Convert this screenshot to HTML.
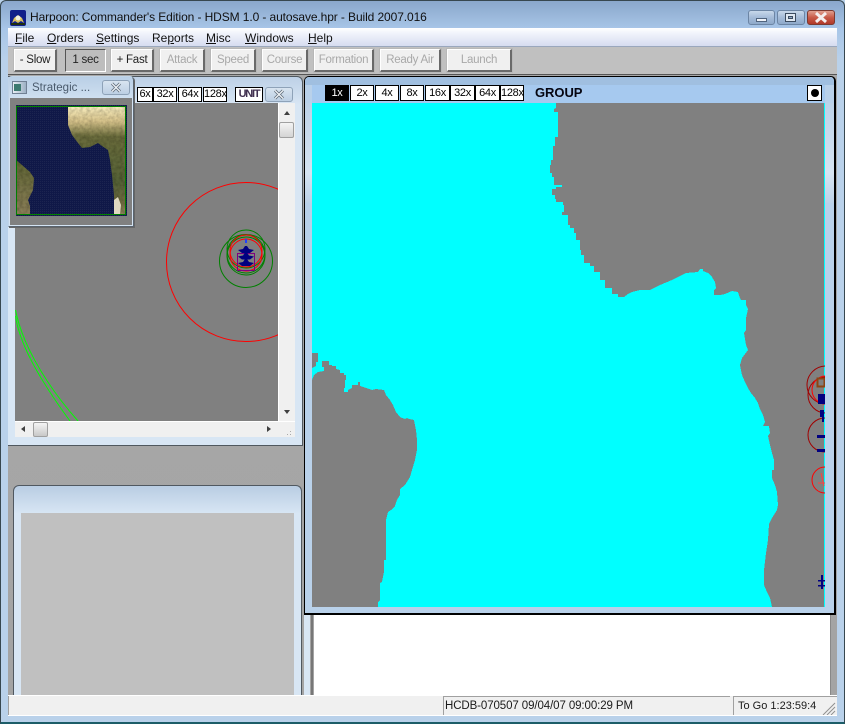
<!DOCTYPE html>
<html>
<head>
<meta charset="utf-8">
<style>
html,body{margin:0;padding:0;width:845px;height:724px;overflow:hidden;background:#b9d1ea;}
body{position:relative;font-family:"Liberation Sans",sans-serif;font-size:12px;color:#000;}
div{position:absolute;box-sizing:border-box;}
.t{white-space:nowrap;line-height:16px;}
.btn{top:49px;height:23px;background:#f0f0f0;border:1px solid #fff;border-right:2px solid #696969;border-bottom:2px solid #696969;box-shadow:0 0 0 1px #b8b8b8;text-align:center;line-height:20px;color:#222;white-space:nowrap;font-size:11.5px;letter-spacing:-.25px;}
.dis{color:#a8a8a8;}
.z{top:87px;height:15px;background:#fff;border:1px solid #000;text-align:center;line-height:13px;font-size:11px;letter-spacing:-.3px;overflow:hidden;white-space:nowrap;}
.y{top:85px;height:16px;line-height:15px;}
.cap{border:1px solid #6c85a4;border-radius:3px;background:linear-gradient(#c8d8ea,#a5bcd8 50%,#8ea9ca);}
u{text-decoration:underline;}
</style>
</head>
<body>
<!-- window frame -->
<div style="left:0;top:0;width:845px;height:724px;border:1px solid #37474f;border-bottom:2px solid #1c5d68;border-radius:6px 6px 0 0;background:linear-gradient(#8aa7cb 0,#a8c6e8 28px,#b9d1ea 60px);"></div>
<div style="left:10px;top:10px;width:16px;height:16px;background:#10208a;border-radius:2px;"></div>
<svg style="position:absolute;left:10px;top:10px" width="16" height="16"><path d="M2 13 L4 8 L8 5 L12 8 L14 13 L11 11 L8 13 L5 11Z" fill="#d8c060"/><circle cx="8" cy="8" r="2.5" fill="#f0f0e0"/><rect x="1" y="13" width="14" height="2" fill="#203010"/></svg>
<div class="t" style="left:30px;top:9px;font-size:12px;color:#101010;letter-spacing:-.1px;">Harpoon: Commander's Edition - HDSM 1.0 - autosave.hpr - Build 2007.016</div>
<!-- caption buttons -->
<div class="cap" style="left:748px;top:10px;width:27px;height:15px;"></div>
<div style="left:756px;top:18px;width:11px;height:4px;background:#eef2f8;border:1px solid #50647e;"></div>
<div class="cap" style="left:777px;top:10px;width:28px;height:15px;"></div>
<div style="left:785px;top:13px;width:11px;height:9px;background:#dfe8f2;border:1px solid #3c4c60;"></div>
<div style="left:788px;top:16px;width:5px;height:3px;background:#90a8c4;border:1px solid #3c4c60;"></div>
<div style="left:807px;top:10px;width:28px;height:15px;border:1px solid #7c3a30;border-radius:3px;background:linear-gradient(#e0a090,#c85a48 50%,#b03a2a);"></div>
<svg style="position:absolute;left:814px;top:11px" width="14" height="13"><path d="M2 2 L12 11 M12 2 L2 11" stroke="#f4eeee" stroke-width="3"/></svg>
<!-- menu -->
<div style="left:8px;top:28px;width:829px;height:19px;background:linear-gradient(#ffffff,#f0f3fb 30%,#d6dcf0);border-bottom:1px solid #9aa7bd;"></div>
<div class="t" style="left:15px;top:30px;color:#111;"><u>F</u>ile</div>
<div class="t" style="left:47px;top:30px;color:#111;"><u>O</u>rders</div>
<div class="t" style="left:96px;top:30px;color:#111;"><u>S</u>ettings</div>
<div class="t" style="left:152px;top:30px;color:#111;">Re<u>p</u>orts</div>
<div class="t" style="left:206px;top:30px;color:#111;"><u>M</u>isc</div>
<div class="t" style="left:245px;top:30px;color:#111;"><u>W</u>indows</div>
<div class="t" style="left:308px;top:30px;color:#111;"><u>H</u>elp</div>
<!-- toolbar -->
<div style="left:8px;top:47px;width:829px;height:28px;background:#c0c0c0;border-bottom:1px solid #555;"></div>
<div class="btn" style="left:14px;width:43px;">- Slow</div>
<div class="btn" style="left:65px;width:41px;background:#bdbdbd;border:1px solid #555;border-right:1px solid #fff;border-bottom:1px solid #fff;box-shadow:none;">1 sec</div>
<div class="btn" style="left:111px;width:43px;">+ Fast</div>
<div class="btn dis" style="left:160px;width:45px;">Attack</div>
<div class="btn dis" style="left:211px;width:45px;">Speed</div>
<div class="btn dis" style="left:262px;width:46px;">Course</div>
<div class="btn dis" style="left:314px;width:60px;">Formation</div>
<div class="btn dis" style="left:380px;width:61px;">Ready Air</div>
<div class="btn dis" style="left:447px;width:65px;">Launch</div>
<!-- client area -->
<div style="left:8px;top:75px;width:829px;height:620px;background:linear-gradient(#a8a8a8,#a4a4a4);"></div>
<!-- left panel -->
<div style="left:8px;top:76px;width:295px;height:370px;background:linear-gradient(#bdd0e6,#d8e6f4 28px);border:1px solid #50585f;border-left:none;border-radius:0 6px 0 0;"></div>
<div style="left:15px;top:103px;width:263px;height:318px;background:#808080;"></div>
<svg style="position:absolute;left:15px;top:103px" width="263" height="318">
<g fill="none" transform="translate(-15,-103)">
<circle cx="246" cy="262" r="79.5" stroke="#ff0000" stroke-width="1"/>
<circle cx="246" cy="261" r="26.5" stroke="#008000"/>
<circle cx="246" cy="249" r="19" stroke="#008000"/>
<circle cx="246" cy="254" r="19" stroke="#008000"/>
<circle cx="246" cy="256" r="19" stroke="#008000"/>
<circle cx="246" cy="251" r="16" stroke="#ff0000"/>
<circle cx="246" cy="255" r="16" stroke="#ff0000"/>
<rect x="237.500" y="253.500" width="17" height="17" stroke="#800080"/>
<path d="M15.500 316 C19 340 34 372 70 421" stroke="#00ff00"/>
<path d="M15.500 310 C21 338 40 378 78 421" stroke="#00ff00"/>
<g fill="#000080" stroke="none">
<path d="M245 246 L247 246 L249 249 L254 250 L250 253 L242 253 L238 250 L243 249Z"/>
<path d="M245 252.500 L247 252.500 L249 255.500 L254 256.500 L250 259.500 L242 259.500 L238 256.500 L243 255.500Z"/>
<path d="M245 259 L247 259 L249 262 L254 263 L250 266 L242 266 L238 263 L243 262Z"/>
</g>
<path d="M246 243 L246 239" stroke="#2040ff" stroke-width="2"/>
</g>
</svg>
<!-- left scrollbars -->
<div style="left:278px;top:103px;width:17px;height:334px;background:#f0f0f0;border-left:1px solid #fff;"></div>
<div style="left:15px;top:421px;width:280px;height:16px;background:#f0f0f0;border-top:1px solid #fff;"></div>
<div style="left:279px;top:122px;width:15px;height:16px;background:linear-gradient(#f4f4f4,#d4d4d4);border:1px solid #a0a0a0;border-radius:2px;"></div>
<div style="left:33px;top:422px;width:15px;height:15px;background:linear-gradient(#f4f4f4,#c8c8c8);border:1px solid #a0a0a0;border-radius:2px;"></div>
<svg style="position:absolute;left:15px;top:103px" width="282" height="336">
<path d="M269 12 L275 12 L272 8Z M269 307 L275 307 L272 311Z" fill="#404040"/>
<path d="M10 323 L6 326 L10 329Z M252 323 L256 326 L252 329Z" fill="#404040"/>
<path d="M272 331h1v1h-1z M275 331h1v1h-1z M275 328h1v1h-1z" fill="#aaa"/>
</svg>
<!-- left zoom row -->
<div class="z" style="left:137px;width:16px;">6x</div>
<div class="z" style="left:153px;width:24px;">32x</div>
<div class="z" style="left:178px;width:24px;">64x</div>
<div class="z" style="left:203px;width:24px;">128x</div>
<div class="z" style="left:235px;width:28px;color:#403050;font-weight:bold;letter-spacing:-1.2px;">UNIT</div>
<div class="cap" style="left:265px;top:87px;width:28px;height:15px;background:linear-gradient(#d8e4f0,#bccfe4);border-color:#8ea2b8;"></div>
<svg style="position:absolute;left:272px;top:88px" width="14" height="13"><path d="M3 2.500 L11 10.500 M11 2.500 L3 10.500" stroke="#5f6c7a" stroke-width="3"/><path d="M3 2.500 L11 10.500 M11 2.500 L3 10.500" stroke="#eef2f6" stroke-width="1.300"/></svg>
<!-- strategic window -->
<div style="left:8px;top:76px;width:126px;height:151px;background:linear-gradient(#b9cfe6,#d4e3f2 26px);border:1px solid #59636e;border-left:1px solid #c0d4e8;border-top:1px solid #c0d4e8;border-radius:4px 4px 0 0;box-shadow:1px 1px 0 #666;"></div>
<div style="left:12px;top:81px;width:15px;height:13px;background:linear-gradient(90deg,#e8eef4,#9cb0c4);border:1px solid #708094;"></div>
<div style="left:14px;top:84px;width:7px;height:7px;background:#3c7a70;"></div>
<div class="t" style="left:32px;top:80px;color:#4a5a6c;font-size:11.5px;">Strategic ...</div>
<div class="cap" style="left:102px;top:80px;width:28px;height:15px;background:linear-gradient(#d8e4f0,#bccfe4);border-color:#8ea2b8;"></div>
<svg style="position:absolute;left:109px;top:81px" width="14" height="13"><path d="M3 2.500 L11 10.500 M11 2.500 L3 10.500" stroke="#5f6c7a" stroke-width="3"/><path d="M3 2.500 L11 10.500 M11 2.500 L3 10.500" stroke="#eef2f6" stroke-width="1.300"/></svg>
<div style="left:10px;top:98px;width:122px;height:127px;background:#808080;"></div>
<svg style="position:absolute;left:16px;top:105px" width="111" height="111">
<defs>
<linearGradient id="l" x1="0" y1="0" x2="0" y2="1">
<stop offset="0" stop-color="#f8eec0"/><stop offset=".14" stop-color="#d8c48c"/><stop offset=".28" stop-color="#6a6c3c"/><stop offset=".7" stop-color="#566238"/><stop offset=".88" stop-color="#6e6a40"/><stop offset="1" stop-color="#908860"/>
</linearGradient>
<linearGradient id="l2" x1="0" y1="0" x2="0" y2="1"><stop offset="0" stop-color="#5e6434"/><stop offset="1" stop-color="#8a7e58"/></linearGradient>
<pattern id="d" width="2" height="2" patternUnits="userSpaceOnUse"><rect width="2" height="2" fill="#101848"/><rect width="1" height="1" fill="#1c2450"/></pattern>
<filter id="n" x="0" y="0" width="100%" height="100%">
<feTurbulence type="fractalNoise" baseFrequency=".3" numOctaves="2" seed="4" result="t"/>
<feColorMatrix in="t" type="matrix" values="0 0 0 0 0  0 0 0 0 0  0 0 0 0 0  .7 0 0 0 -.22" result="a"/>
<feComposite in="a" in2="SourceAlpha" operator="in" result="c"/>
<feMerge><feMergeNode in="SourceGraphic"/><feMergeNode in="c"/></feMerge>
</filter>
</defs>
<rect width="111" height="111" fill="url(#d)"/>
<g transform="translate(-16,-105)">
<g filter="url(#n)">
<path d="M68 106 L68 125 L72 135 L78 143 L82 148 L90 147 L98 143 L102 146 L108 150 L110 160 L112 175 L114 195 L114 215 L126 215 L126 106Z" fill="url(#l)"/>
<path d="M16 160 L22 165 L30 172 L34 178 L33 190 L28 200 L30 206 L30 215 L16 215Z" fill="url(#l2)"/>
</g>
<path d="M114 200 L118 197 L121 205 L120 214 L114 214Z" fill="#e0d8c0"/>
<rect x="16.500" y="106.500" width="109" height="108" fill="none" stroke="#008000"/>
</g>
</svg>
<!-- lower-left panel -->
<div style="left:13px;top:485px;width:289px;height:215px;background:linear-gradient(#b9cde3,#d8e6f4 28px);border:1px solid #505860;border-bottom:none;border-radius:6px 6px 0 0;"></div>
<div style="left:21px;top:513px;width:273px;height:183px;background:#c0c0c0;"></div>
<!-- bottom right pane -->
<div style="left:304px;top:610px;width:6px;height:85px;background:#d8e6f4;"></div>
<div style="left:310px;top:610px;width:3px;height:85px;background:#a4a4a4;border-right:2px solid #777;"></div>
<div style="left:314px;top:610px;width:517px;height:85px;background:#fff;border-right:1px solid #888;"></div>
<!-- main map frame -->
<div style="left:304px;top:76px;width:532px;height:539px;background:#b9d1ea;border:1px solid #000;border-right:2px solid #000;border-bottom:2px solid #000;border-radius:5px 5px 0 0;"></div>
<div style="left:305px;top:77px;width:529px;height:8px;background:#a0bfe0;border-radius:4px 4px 0 0;"></div>
<div style="left:312px;top:85px;width:513px;height:18px;background:#a6c9ef;"></div>
<div style="left:305px;top:103px;width:7px;height:100px;background:linear-gradient(#bdd2e8,#d6e4f2 70%,#bdd2e8);"></div>
<div style="left:825px;top:103px;width:9px;height:100px;background:linear-gradient(#bdd2e8,#d6e4f2 70%,#bdd2e8);"></div>
<svg style="position:absolute;left:312px;top:103px" width="513" height="504">
<rect width="513" height="504" fill="#00ffff"/>
<g transform="translate(-312,-103)">
<path fill="#808080" shape-rendering="crispEdges" d="M556 103 L556 108 L554 109 L554 112 L558 112 L558 137 L555 137 L555 146 L553 146 L553 160 L551 160 L551 165 L550 165 L550 173 L552 173 L552 177 L554 177 L554 185 L562 185 L562 187 L556 187 L556 189 L552 189 L552 195 L555 195 L555 199 L556 199 L556 202 L563 202 L563 205 L564 205 L564 212 L562 212 L562 215 L568 215 L568 225 L570 225 L570 228 L574 228 L574 233 L576 233 L576 240 L580 240 L580 250 L581 250 L581 255 L584 255 L584 263 L590 263 L590 266 L594 266 L594 272 L600 272 L600 280 L605 280 L605 288 L612 288 L612 294 L618 294 L618 297 L624 297 L628 294 L632 292 L640 290 L650 290 L660 285 L672 280 L680 276 L686 273 L698 272 L700 269 L703 269 L703 271 L708 273 L712 277 L715 282 L716 288 L714 290 L714 295 L720 295 L725 294 L732 291 L738 292 L740 298 L741 300 L746 300 L746 305 L748 309 L746 318 L746 330 L744 333 L746 345 L748 350 L742 358 L740 365 L742 375 L745 382 L748 388 L751 393 L755 398 L758 403 L760 409 L763 415 L765 422 L763 426 L769 426 L770 433 L768 436 L770 445 L772 453 L774 460 L774 470 L772 470 L772 478 L775 485 L777 492 L778 505 L777 510 L772 518 L769 524 L768 540 L766 553 L764 570 L764 585 L767 592 L770 598 L772 607 L824 607 L824 103Z"/>
<path fill="#808080" shape-rendering="crispEdges" d="M312 353 L318 353 L318 362 L316 362 L316 366 L312 368Z"/>
<path fill="#808080" shape-rendering="crispEdges" d="M312 380 L314 375 L318 372 L324 371 L324 367 L322 367 L322 361 L329 361 L329 365 L332 365 L332 366 L336 366 L336 369 L340 370 L340 373 L344 373 L344 375 L346 375 L346 380 L345 380 L345 388 L344 388 L344 392 L348 392 L348 390 L352 388 L352 385 L358 385 L358 382 L360 382 L360 386 L366 388 L372 390 L376 389 L384 390 L386 395 L390 400 L393 405 L396 412 L400 417 L402 418 L405 419 L407 418 L409 419 L414 420 L416 430 L417 440 L417 450 L415 460 L412 470 L410 477 L405 485 L400 489 L400 495 L397 500 L395 506 L391 510 L388 512 L386 520 L386 560 L384 560 L384 572 L382 582 L380 583 L380 600 L378 602 L378 607 L312 607Z"/>
<g fill="none">
<circle cx="826" cy="385" r="19" stroke="#a00000"/>
<circle cx="826" cy="395" r="18" stroke="#a00000"/>
<circle cx="826" cy="390" r="14" stroke="#ff0000"/>
<circle cx="825" cy="435" r="17" stroke="#a00000"/>
<circle cx="825" cy="480" r="13" stroke="#ff0000"/>
<rect x="817.500" y="378.500" width="7" height="8" stroke="#8b4513" stroke-width="2"/>
</g>
<g fill="#000080">
<path d="M818 394h7v10h-7z M820 410h4v12h-2v-5h-2z M817 435h8v3h-8z M817 449h8v3h-8z"/>
<path d="M821 575h2v14h-2z M818 580h7v1.500h-7z M818 585h7v1.500h-7z"/>
</g>
<path d="M821 473 L824 486 M818 483 L825 483" stroke="#ff4040" fill="none"/>
</g>
</svg>
<!-- right zoom row -->
<div class="z y" style="left:325px;width:24px;background:#000;color:#fff;">1x</div>
<div class="z y" style="left:350px;width:24px;">2x</div>
<div class="z y" style="left:375px;width:24px;">4x</div>
<div class="z y" style="left:400px;width:24px;">8x</div>
<div class="z y" style="left:425px;width:25px;">16x</div>
<div class="z y" style="left:450px;width:25px;">32x</div>
<div class="z y" style="left:475px;width:25px;">64x</div>
<div class="z y" style="left:500px;width:24px;">128x</div>
<div class="t" style="left:535px;top:85px;font-size:13px;font-weight:bold;letter-spacing:-.05px;color:#050510;">GROUP</div>
<div style="left:807px;top:85px;width:15px;height:16px;background:#fff;border:1px solid #000;"></div>
<div style="left:811px;top:89px;width:8px;height:8px;background:#000;border-radius:50%;"></div>
<!-- status bar -->
<div style="left:8px;top:695px;width:829px;height:21px;background:#f0f0f0;border-top:1px solid #fff;border-bottom:1px solid #fff;"></div>
<div style="left:8px;top:696px;width:434px;height:19px;border-left:1px solid #a0a0a0;"></div>
<div style="left:443px;top:696px;width:287px;height:19px;border-left:1px solid #a0a0a0;border-top:1px solid #a0a0a0;"></div>
<div style="left:733px;top:696px;width:104px;height:19px;border-left:1px solid #a0a0a0;border-top:1px solid #a0a0a0;"></div>
<div class="t" style="left:445px;top:698px;color:#1a1a1a;font-size:11.5px;letter-spacing:-.1px;">HCDB-070507 09/04/07 09:00:29 PM</div>
<div class="t" style="left:738px;top:698px;color:#1a1a1a;font-size:11px;">To Go 1:23:59:4</div>
<svg style="position:absolute;left:822px;top:702px" width="14" height="13"><path d="M1 13 L13 1 M5 13 L13 5 M9 13 L13 9" stroke="#909090" stroke-width="1"/></svg>
</body>
</html>
